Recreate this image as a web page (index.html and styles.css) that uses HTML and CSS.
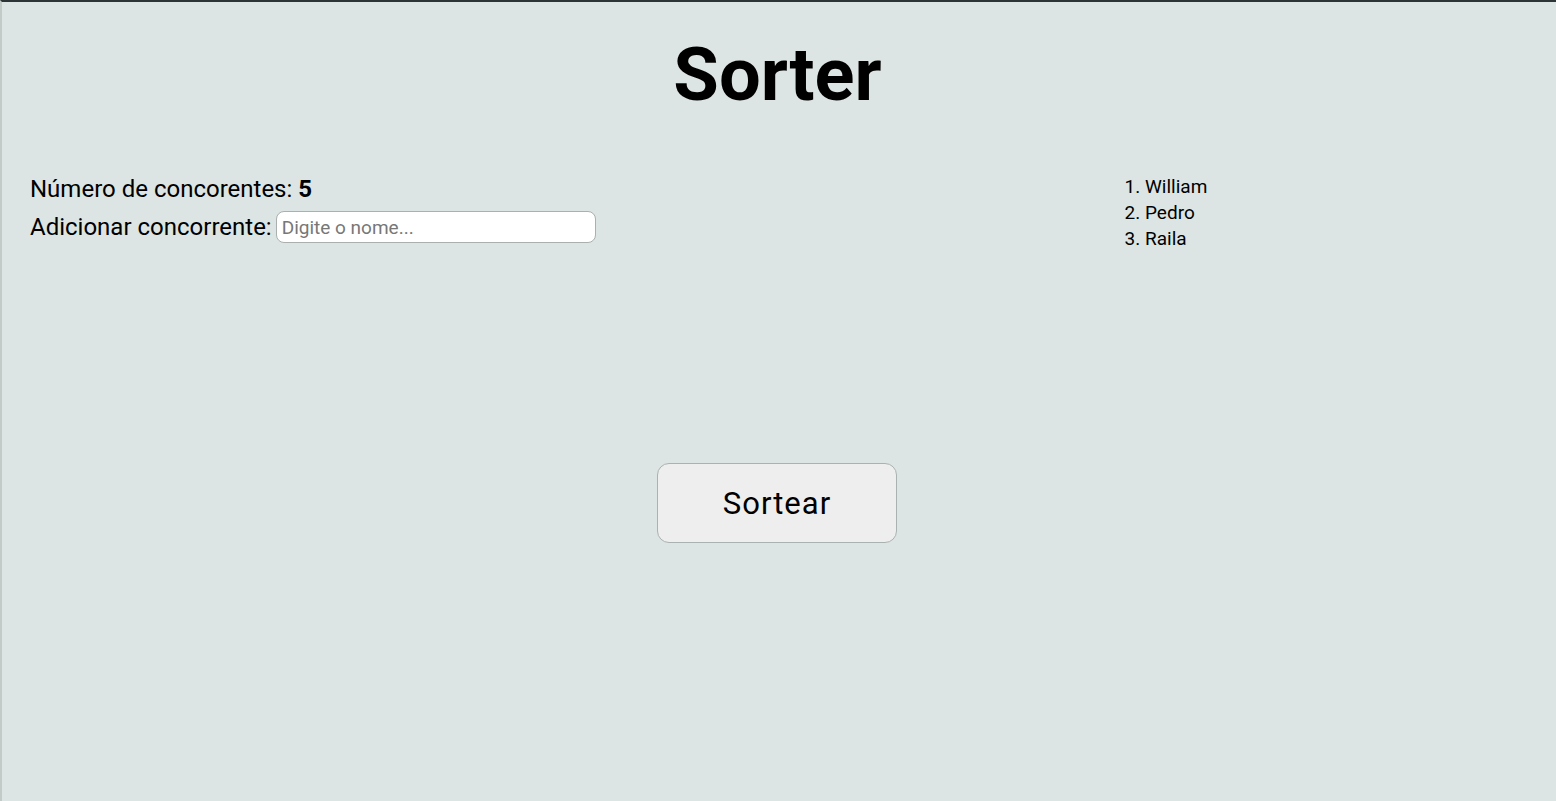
FILE: index.html
```html
<!DOCTYPE html>
<html lang="pt-BR">
<head>
<meta charset="utf-8">
<title>Sorter</title>
<link rel="stylesheet" href="styles.css">
</head>
<body>
<div class="app">
  <h1 class="title">Sorter</h1>
  <main class="main">
    <section class="form">
      <p class="count">Número de concorentes: <strong>5</strong></p>
      <label class="add">Adicionar concorrente: <input class="name-input" type="text" placeholder="Digite o nome..."></label>
    </section>
    <section class="list-col">
      <ol class="list">
        <li>William</li>
        <li>Pedro</li>
        <li>Raila</li>
      </ol>
    </section>
  </main>
  <div class="actions">
    <button class="sort-btn" type="button">Sortear</button>
  </div>
</div>
</body>
</html>
```

FILE: styles.css
```css
html, body {
  margin: 0;
  padding: 0;
  height: 100%;
}
body {
  background: #dce5e3;
  font-family: Roboto, "Liberation Sans", sans-serif;
  color: #000;
  box-sizing: border-box;
  border-top: 2px solid #2d3436;
  border-left: 2px solid #c3cbc9;
}
.app {
  display: flex;
  flex-direction: column;
}
.title {
  margin: 26px 0 0;
  text-align: center;
  font-size: 74px;
  font-weight: 700;
  line-height: 94px;
  padding-right: 3px;
}
.main {
  display: flex;
  justify-content: space-between;
  padding: 0 28px;
  margin-top: 52px;
}
.form {
  display: flex;
  flex-direction: column;
  gap: 8px;
  margin-top: 1px;
}
.count {
  margin: 0;
  font-size: 24px;
  line-height: 28px;
}
.count strong {
  font-weight: 700;
}
.add {
  font-size: 24px;
  line-height: 32px;
  display: flex;
  align-items: center;
  gap: 4px;
}
.name-input {
  width: 320px;
  height: 32px;
  box-sizing: border-box;
  border: 1px solid #a9b0ae;
  border-radius: 8px;
  background: #fff;
  padding: 0 5px;
  font-family: Roboto, "Liberation Sans", sans-serif;
  font-size: 19px;
  color: #000;
}
.name-input::placeholder {
  color: #777;
}
.list-col {
  width: 423px;
}
.list {
  margin: 0;
  padding-left: 40px;
  font-size: 19px;
  line-height: 26px;
}
.actions {
  display: flex;
  justify-content: center;
  margin-top: 211px;
  padding-right: 4px;
}
.sort-btn {
  width: 240px;
  height: 80px;
  border: 1px solid #a9b2b0;
  border-radius: 12px;
  background: #eeeeee;
  font-family: Roboto, "Liberation Sans", sans-serif;
  font-size: 31px;
  letter-spacing: 1px;
  color: #000;
  cursor: pointer;
}
```
